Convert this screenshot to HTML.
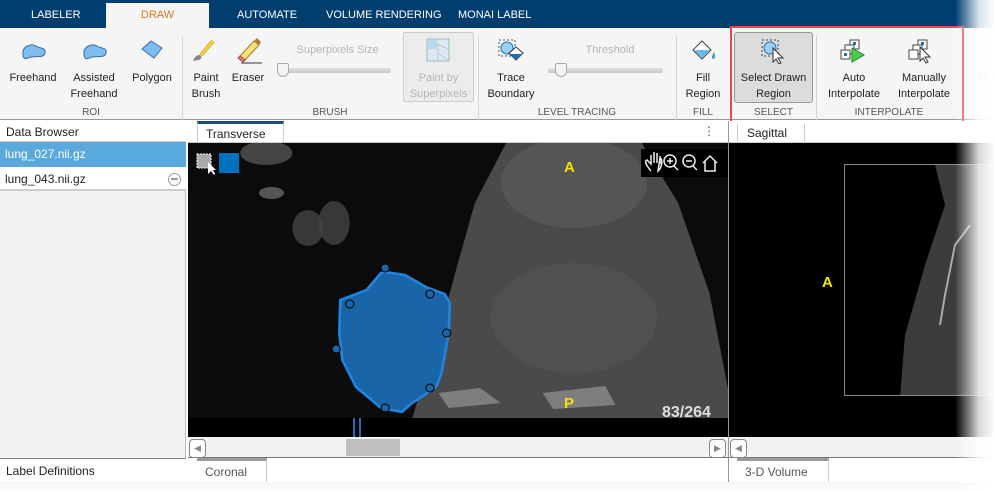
<!DOCTYPE html>
<html><head><meta charset="utf-8">
<style>
*{margin:0;padding:0;box-sizing:border-box}
body{width:995px;height:493px;overflow:hidden;background:#fff;font-family:"Liberation Sans",sans-serif;position:relative}
.abs{position:absolute}
.top{left:0;top:0;width:995px;height:28px;background:#003e70}
.tab{position:absolute;top:9px;color:#fff;font-size:11px}
.draw{left:106px;top:3px;width:103px;height:26px;background:#f5f5f5;color:#d27a1e;font-size:11px;text-align:center;padding-top:6px}
.rib{left:0;top:28px;width:995px;height:92px;background:#f5f5f5;border-bottom:1px solid #999}
.lbl{position:absolute;font-size:11px;color:#222;text-align:center;line-height:16px}
.sec{position:absolute;top:107px;font-size:10px;color:#555;text-align:center}
.sep{position:absolute;top:36px;width:1px;height:84px;background:#d4d4d4}
.dis{color:#b5b5b5}
.slider{position:absolute;height:5px;background:linear-gradient(#e0e0e0,#c8c8c8);border-radius:2px}
.thumb{position:absolute;width:12px;height:14px;background:#f4f4f4;border:1px solid #aaa;border-radius:2px 2px 6px 6px}
</style></head><body>
<div class="abs top"></div>
<div class="tab" style="left:31px">LABELER</div>
<div class="abs draw">DRAW</div>
<div class="tab" style="left:237px">AUTOMATE</div>
<div class="tab" style="left:326px">VOLUME RENDERING</div>
<div class="tab" style="left:458px">MONAI LABEL</div>

<div class="abs rib"></div>
<svg class="abs" style="left:20px;top:40px" width="28" height="22"><path d="M3 14 C2 6 12 3 16 6 C20 9 26 7 25 13 C24 19 14 15 8 18 C4 20 3 17 3 14Z" fill="#7fbdf0" stroke="#3a6ea5"/></svg>
<svg class="abs" style="left:81px;top:40px" width="28" height="22"><path d="M3 14 C2 6 12 3 16 6 C20 9 26 7 25 13 C24 19 14 15 8 18 C4 20 3 17 3 14Z" fill="#7fbdf0" stroke="#3a6ea5"/></svg>
<svg class="abs" style="left:139px;top:38px" width="26" height="24"><path d="M3 11 L12 3 L23 10 L15 20 Z" fill="#7fbdf0" stroke="#3a6ea5"/></svg>
<div class="lbl" style="left:0;top:70px;width:66px">Freehand</div>
<div class="lbl" style="left:66px;top:70px;width:56px">Assisted<br>Freehand</div>
<div class="lbl" style="left:124px;top:70px;width:56px">Polygon</div>
<div class="sec" style="left:0;width:182px">ROI</div>
<div class="sep" style="left:182px"></div>
<svg class="abs" style="left:191px;top:38px" width="28" height="26"><path d="M22 3 L10 17" stroke="#c9a400" stroke-width="4"/><path d="M22 3 L10 17" stroke="#f2d24a" stroke-width="2.5"/><path d="M9 17 C4 17 3 21 2 23 L8 22 C11 21 11 18 9 17Z" fill="#888"/></svg>
<svg class="abs" style="left:234px;top:36px" width="30" height="28"><path d="M6 20 L20 5 L25 9 L11 24 Z" fill="#f4e27a" stroke="#a07d10"/><path d="M6 20 L11 24 L9 26 L4 22Z" fill="#f08080" stroke="#b04040"/><path d="M20 5 L23 2 L27 6 L25 9Z" fill="#b07d40"/><path d="M7 27 H28" stroke="#333"/></svg>
<div class="lbl" style="left:184px;top:70px;width:44px">Paint<br>Brush</div>
<div class="lbl" style="left:228px;top:70px;width:40px">Eraser</div>
<div class="lbl dis" style="left:280px;top:42px;width:115px">Superpixels Size</div>
<div class="slider" style="left:277px;top:68px;width:114px"></div>
<div class="thumb" style="left:277px;top:63px"></div>
<div class="abs" style="left:403px;top:32px;width:71px;height:70px;border:1px solid #ccc;background:#ececec;border-radius:2px"></div>
<svg class="abs" style="left:426px;top:38px" width="24" height="24"><rect x="1" y="1" width="22" height="22" fill="#dce9f4" stroke="#9bb"/><path d="M1 12 L12 6 L23 12 M12 6 L12 23 M6 1 L12 6 M12 15 L23 23" stroke="#bcc" fill="none"/><rect x="2" y="2" width="9" height="9" fill="#b8d8f0"/></svg>
<div class="lbl dis" style="left:403px;top:70px;width:71px">Paint by<br>Superpixels</div>
<div class="sec" style="left:182px;width:296px">BRUSH</div>
<div class="sep" style="left:478px"></div>
<svg class="abs" style="left:497px;top:38px" width="28" height="26"><rect x="2" y="2" width="16" height="16" fill="none" stroke="#555" stroke-dasharray="2,2"/><circle cx="10" cy="10" r="6" fill="#9cd0f5" stroke="#1a6fb5"/><path d="M12 15 L19 9 L26 15 L19 22Z" fill="#fff" stroke="#333"/><path d="M13 16 L19 22 L25 16Z" fill="#1a6fb5"/></svg>
<div class="lbl" style="left:480px;top:70px;width:62px">Trace<br>Boundary</div>
<div class="lbl dis" style="left:560px;top:42px;width:100px">Threshold</div>
<div class="slider" style="left:548px;top:68px;width:115px"></div>
<div class="thumb" style="left:555px;top:63px"></div>
<div class="sec" style="left:478px;width:198px">LEVEL TRACING</div>
<div class="sep" style="left:676px"></div>
<svg class="abs" style="left:690px;top:38px" width="28" height="26"><path d="M3 12 L12 3 L21 12 L12 21Z" fill="#fff" stroke="#444"/><path d="M4 12 L20 12 L12 20Z" fill="#6ab8f0"/><path d="M24 14 C22 18 21 20 23 21 C25 21 26 18 24 14Z" fill="#3a9be0"/></svg>
<div class="lbl" style="left:678px;top:70px;width:50px">Fill<br>Region</div>
<div class="sec" style="left:676px;width:54px">FILL</div>
<div class="sep" style="left:730px"></div>
<div class="abs" style="left:734px;top:32px;width:79px;height:71px;background:#dcdcdc;border:1px solid #999;border-radius:3px"></div>
<svg class="abs" style="left:760px;top:38px" width="28" height="26"><rect x="2" y="2" width="16" height="16" fill="none" stroke="#444" stroke-dasharray="2,2"/><circle cx="10" cy="10" r="6" fill="#9cd0f5" stroke="#1a6fb5"/><path d="M13 10 L13 24 L16 21 L19 26 L21 25 L18 20 L23 20Z" fill="#fff" stroke="#333"/></svg>
<div class="lbl" style="left:734px;top:70px;width:79px">Select Drawn<br>Region</div>
<div class="sec" style="left:730px;width:87px">SELECT</div>
<div class="sep" style="left:816px"></div>
<svg class="abs" style="left:840px;top:38px" width="28" height="26"><rect x="10" y="2" width="9" height="9" fill="#fff" stroke="#444"/><rect x="5" y="7" width="9" height="9" fill="#fff" stroke="#444"/><rect x="1" y="12" width="9" height="9" fill="#fff" stroke="#444"/><rect x="13" y="4" width="3" height="3" fill="#1a6fb5"/><rect x="4" y="15" width="3" height="3" fill="#1a6fb5"/><path d="M12 10 L24 17 L12 24Z" fill="#4cd04c" stroke="#1a8a1a"/></svg>
<svg class="abs" style="left:908px;top:38px" width="28" height="26"><rect x="10" y="2" width="9" height="9" fill="#fff" stroke="#444"/><rect x="5" y="7" width="9" height="9" fill="#fff" stroke="#444"/><rect x="1" y="12" width="9" height="9" fill="#fff" stroke="#444"/><rect x="13" y="4" width="3" height="3" fill="#1a6fb5"/><path d="M12 9 L12 23 L15 20 L18 25 L20 24 L17 19 L22 19Z" fill="#fff" stroke="#333"/></svg>
<div class="lbl" style="left:818px;top:70px;width:72px">Auto<br>Interpolate</div>
<div class="lbl" style="left:888px;top:70px;width:72px">Manually<br>Interpolate</div>
<div class="sec" style="left:816px;width:146px">INTERPOLATE</div>
<div class="lbl dis" style="left:966px;top:70px;width:40px">Hid<br>on</div>
<div class="abs" style="left:730px;top:26px;width:234px;height:98px;border:2px solid #e8474c"></div>

<div class="abs" style="left:0;top:121px;width:186px;height:372px;background:#f2f2f2;border-right:1px solid #bbb"></div>
<div class="abs" style="left:0;top:121px;width:186px;height:21px;background:#fff;border-bottom:1px solid #ccc;font-size:12px;padding:4px 6px;color:#222">Data Browser</div>
<div class="abs" style="left:0;top:142px;width:186px;height:25px;background:#5aa9dc;color:#fff;font-size:12px;padding:5px 5px">lung_027.nii.gz</div>
<div class="abs" style="left:0;top:167px;width:186px;height:24px;background:#fff;border-bottom:2px solid #ccc;color:#222;font-size:12px;padding:5px 5px">lung_043.nii.gz</div>
<div class="abs" style="left:168px;top:173px;width:13px;height:13px;border:1.5px solid #999;border-radius:50%"><div style="margin:4px 2px;height:2px;background:#999"></div></div>
<div class="abs" style="left:0;top:458px;width:186px;height:24px;background:#fff;border-top:1px solid #888;font-size:12px;padding:5px 6px;color:#222">Label Definitions</div>

<div class="abs" style="left:187px;top:121px;width:541px;height:22px;background:#fff;border-bottom:1px solid #ccc"></div>
<div class="abs" style="left:197px;top:121px;width:87px;height:22px;border-top:3px solid #1d4d80;border-right:1px solid #ccc;border-left:1px solid #ccc;font-size:12px;padding:3px 8px;color:#222">Transverse</div>
<div class="abs" style="left:703px;top:124px;font-size:12px;color:#555">⋮</div>
<div class="abs" style="left:188px;top:143px;width:540px;height:275px;background:#0b0b0b;overflow:hidden">
<svg width="540" height="275" style="position:absolute;left:0;top:0"><g transform="translate(-2,0) scale(1.0427,1) translate(2,0)">
<path d="M305 0 L435 0 L470 60 L500 150 L518 247 L540 275 L215 275 L251 150 L258 123 L275 60 Z" fill="#4a4a4a"/>
<ellipse cx="370" cy="40" rx="70" ry="45" fill="#555"/>
<ellipse cx="370" cy="175" rx="80" ry="55" fill="#555" opacity=".6"/>
<ellipse cx="75" cy="10" rx="25" ry="12" fill="#444"/>
<ellipse cx="80" cy="50" rx="12" ry="6" fill="#555"/>
<ellipse cx="115" cy="85" rx="15" ry="18" fill="#444" opacity=".8"/>
<ellipse cx="140" cy="80" rx="15" ry="22" fill="#444" opacity=".8"/>
<path d="M240 250 L280 245 L300 260 L250 265Z M340 250 L400 243 L410 262 L350 266Z" fill="#aaa" opacity=".55"/>
</g></svg>
</div>
<svg class="abs" style="left:188px;top:143px" width="540" height="275">
<g transform="translate(-2,0) scale(1.0427,1) translate(2,0)">
<polygon points="189,129 208,132 228,144 246,151 251,160 250,190 243,230 238,244 215,260 205,269 185,265 161,244 148,217 145,190 146,157 171,147 185,130" fill="#1a64a8" stroke="#1e86e0" stroke-width="2.5"/>
<g fill="#1a64a8" stroke="#000" stroke-width="1">
<circle cx="189" cy="125" r="4"/><circle cx="232" cy="151" r="4"/><circle cx="155" cy="161" r="4"/><circle cx="248" cy="190" r="4"/><circle cx="142" cy="206" r="4"/><circle cx="232" cy="245" r="4"/><circle cx="189" cy="265" r="4"/></g>
</g>
<text x="376" y="29" font-size="15" font-weight="bold" fill="#f5e300" font-family="Liberation Sans">A</text>
<text x="376" y="265" font-size="15" font-weight="bold" fill="#f5e300" font-family="Liberation Sans">P</text>
<text x="474" y="274" font-size="16" font-weight="bold" fill="#ddd" font-family="Liberation Sans">83/264</text>
<rect x="9" y="11" width="14" height="14" fill="#aaa" stroke="#fff" stroke-dasharray="2,1"/><path d="M20 19 L20 31 L23 28 L26 32 L27 31 L25 27 L28 27Z" fill="#fff"/>
<rect x="31" y="10" width="20" height="20" fill="#0070c0"/>
<rect x="453" y="6" width="87" height="28" fill="#000"/>
<g stroke="#eee" fill="none" stroke-width="1.5"><path d="M463 28 C458 22 456 18 459 17 L463 21 L463 12 M466 20 L466 9 M469 20 L469 10 M472 21 L472 13 M472 15 C475 16 474 25 470 28 Z"/><circle cx="482" cy="18" r="6"/><path d="M486 23 L490 27 M479 18 H485 M482 15 V21"/><circle cx="501" cy="18" r="6"/><path d="M505 23 L509 27 M498 18 H504"/><path d="M515 20 L522 13 L529 20 M517 18 V28 H527 V18"/></g>
</svg>
<div class="abs" style="left:188px;top:418px;width:540px;height:19px;background:#000"></div>
<div class="abs" style="left:353px;top:418px;width:2px;height:19px;background:#1a70c0"></div>
<div class="abs" style="left:359px;top:418px;width:2px;height:19px;background:#1a70c0"></div>
<div class="abs" style="left:188px;top:437px;width:540px;height:21px;background:#f2f2f2;border-bottom:1px solid #777"></div>
<div class="abs" style="left:346px;top:439px;width:54px;height:17px;background:#c0c0c0"></div>
<div class="abs" style="left:189px;top:439px;width:17px;height:19px;border:1px solid #888;border-radius:4px;background:#fff;font-size:9px;color:#888;text-align:center;line-height:17px">◀</div>
<div class="abs" style="left:709px;top:439px;width:17px;height:19px;border:1px solid #888;border-radius:4px;background:#fff;font-size:9px;color:#888;text-align:center;line-height:17px">▶</div>
<div class="abs" style="left:187px;top:458px;width:541px;height:24px;background:#fff"></div>
<div class="abs" style="left:197px;top:458px;width:70px;height:24px;border-top:3px solid #999;border-right:1px solid #ccc;font-size:12px;padding:4px 8px;color:#555">Coronal</div>
<div class="abs" style="left:728px;top:121px;width:1px;height:372px;background:#999"></div>

<div class="abs" style="left:729px;top:121px;width:266px;height:22px;background:#fff;border-bottom:1px solid #ccc"></div>
<div class="abs" style="left:737px;top:124px;width:68px;height:19px;border-left:1px solid #ccc;border-right:1px solid #ccc;font-size:12px;padding:2px 9px;color:#222">Sagittal</div>
<div class="abs" style="left:729px;top:143px;width:266px;height:294px;background:#000"></div>
<div class="abs" style="left:844px;top:164px;width:151px;height:232px;border:1px solid #888;background:#000;overflow:hidden">
<svg width="151" height="232"><path d="M90 0 L151 0 L151 232 L55 232 L60 170 L80 100 L100 40 Z" fill="#3c3c3c"/><path d="M125 60 L110 80 L100 130 L95 160" stroke="#aaa" stroke-width="2" fill="none"/></svg>
</div>
<div class="abs" style="left:822px;top:274px;font-size:15px;font-weight:bold;color:#f5e300">A</div>
<div class="abs" style="left:729px;top:437px;width:266px;height:21px;background:#f2f2f2;border-bottom:1px solid #777"></div>
<div class="abs" style="left:730px;top:439px;width:17px;height:19px;border:1px solid #888;border-radius:4px;background:#fff;font-size:9px;color:#888;text-align:center;line-height:17px">◀</div>
<div class="abs" style="left:729px;top:458px;width:266px;height:24px;background:#fff"></div>
<div class="abs" style="left:737px;top:458px;width:92px;height:24px;border-top:3px solid #999;border-right:1px solid #ccc;font-size:12px;padding:4px 8px;color:#555">3-D Volume</div>
<div class="abs" style="left:0;top:482px;width:995px;height:11px;background:linear-gradient(#f4f4f4,#fff)"></div>
<div class="abs" style="left:955px;top:0;width:40px;height:493px;background:linear-gradient(90deg,rgba(255,255,255,0),rgba(255,255,255,.85) 60%,#fff)"></div>
</body></html>
